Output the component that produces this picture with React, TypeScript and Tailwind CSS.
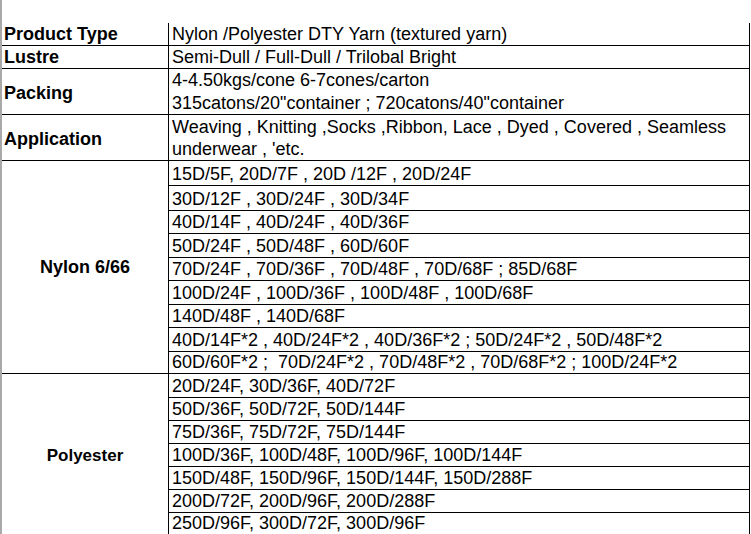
const nylonRows: { text: string; h: string }[] = [
  { text: '15D/5F, 20D/7F , 20D /12F , 20D/24F', h: 'h-[25px]' },
  { text: '30D/12F , 30D/24F , 30D/34F', h: 'h-[25px]' },
  { text: '40D/14F , 40D/24F , 40D/36F', h: 'h-[23px]' },
  { text: '50D/24F , 50D/48F , 60D/60F', h: 'h-[24px]' },
  { text: '70D/24F , 70D/36F , 70D/48F , 70D/68F ; 85D/68F', h: 'h-[23px]' },
  { text: '100D/24F , 100D/36F , 100D/48F , 100D/68F', h: 'h-[24px]' },
  { text: '140D/48F , 140D/68F', h: 'h-[23px]' },
  { text: '40D/14F*2 , 40D/24F*2 , 40D/36F*2 ; 50D/24F*2 , 50D/48F*2', h: 'h-[24px]' },
  { text: '60D/60F*2 ;  70D/24F*2 , 70D/48F*2 , 70D/68F*2 ; 100D/24F*2', h: 'h-[21px]' },
]

const polyRows: { text: string; h: string }[] = [
  { text: '20D/24F, 30D/36F, 40D/72F', h: 'h-[24px]' },
  { text: '50D/36F, 50D/72F, 50D/144F', h: 'h-[23px]' },
  { text: '75D/36F, 75D/72F, 75D/144F', h: 'h-[23px]' },
  { text: '100D/36F, 100D/48F, 100D/96F, 100D/144F', h: 'h-[23px]' },
  { text: '150D/48F, 150D/96F, 150D/144F, 150D/288F', h: 'h-[23px]' },
  { text: '200D/72F, 200D/96F, 200D/288F', h: 'h-[23px]' },
  { text: '250D/96F, 300D/72F, 300D/96F', h: 'h-[21px]' },
]

function SubRows({ rows }: { rows: { text: string; h: string }[] }) {
  return (
    <div className="flex min-w-0 flex-1 flex-col">
      {rows.map((row, i) => (
        <div
          key={row.text}
          className={`flex shrink-0 items-end pl-[3px] leading-[22px] whitespace-pre ${row.h} ${
            i < rows.length - 1 ? 'border-b border-black' : ''
          }`}
        >
          {row.text}
        </div>
      ))}
    </div>
  )
}

export default function App() {
  return (
    <div className="h-[534px] w-[751px] overflow-hidden border-l-2 border-[#a9a9a9] bg-white font-['Liberation_Sans',Arial,sans-serif] text-[18px] text-black">
      <div className="h-[23px]" />
      <div className="w-[748px] border-r border-black">
        {/* header */}
        <div className="flex h-[23px] border-b border-black">
          <div className="flex w-[167px] shrink-0 items-end border-r border-black pl-[2px] font-bold leading-[22px]">
            Product Type
          </div>
          <div className="flex flex-1 items-end pl-[3px] leading-[22px]">
            Nylon /Polyester DTY Yarn (textured yarn)
          </div>
        </div>

        <div className="flex h-[23px] border-b border-black">
          <div className="flex w-[167px] shrink-0 items-end border-r border-black pl-[2px] font-bold leading-[22px]">
            Lustre
          </div>
          <div className="flex flex-1 items-end pl-[3px] leading-[22px]">
            Semi-Dull / Full-Dull / Trilobal Bright
          </div>
        </div>

        <div className="flex h-[46px] border-b border-black">
          <div className="flex w-[167px] shrink-0 items-center border-r border-black pl-[2px] pt-[3px] font-bold leading-[23px]">
            Packing
          </div>
          <div className="flex-1 pl-[3px] leading-[23px]">
            4-4.50kgs/cone 6-7cones/carton
            <br />
            315catons/20"container ; 720catons/40"container
          </div>
        </div>

        <div className="flex h-[46px] border-b border-black">
          <div className="flex w-[167px] shrink-0 items-center border-r border-black pl-[2px] pt-[3px] font-bold leading-[23px]">
            Application
          </div>
          <div className="flex-1 pl-[3px] pt-[1px] leading-[22px]">
            Weaving , Knitting ,Socks ,Ribbon, Lace , Dyed , Covered , Seamless
            <br />
            underwear , 'etc.
          </div>
        </div>

        <div className="flex h-[213px] border-b border-black">
          <div className="flex w-[167px] shrink-0 items-center justify-center border-r border-black font-bold leading-[23px]">
            Nylon 6/66
          </div>
          <SubRows rows={nylonRows} />
        </div>

        <div className="flex h-[160px]">
          <div className="flex w-[167px] shrink-0 items-center justify-center border-r border-black pt-[3px] text-[17px] font-bold leading-[23px]">
            Polyester
          </div>
          <SubRows rows={polyRows} />
        </div>
      </div>
    </div>
  )
}
